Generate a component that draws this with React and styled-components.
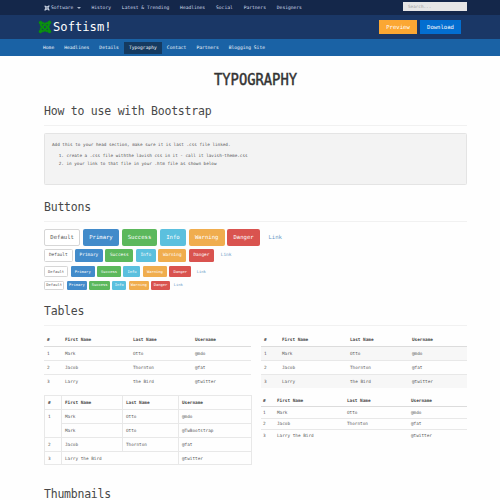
import React from "react";
import styled, { createGlobalStyle, css } from "styled-components";
import { FaJoomla } from "react-icons/fa";

const mono = `"DejaVu Sans Mono", monospace`;

const Global = createGlobalStyle`
  * { box-sizing: border-box; }
  html, body { margin: 0; background: #fefefe; overflow: hidden; }
  body { font: 4.36px/1.4 ${mono}; color: #444; }
`;

const Page = styled.div`width: 500px; height: 500px; overflow: hidden;`;

const TopBar = styled.header`
  height: 15px;
  padding: 1px 33px 0 43.5px;
  display: flex;
  align-items: center;
  background: #14274a;
  color: #d3dcea;
  font-size: 4.64px;
`;
const TopLink = styled.a`
  display: flex;
  align-items: center;
  margin-right: 10.9px;
  white-space: pre;
`;
const BrandMark = styled(FaJoomla)`
  width: 6px; height: 6px; margin-right: 1.5px;
`;
const Caret = styled.i`
  margin-left: 3.3px;
  border: 1.5px solid transparent;
  border-width: 2px 2px 0;
  border-top-color: #aab6c8;
`;
const Search = styled.div`
  width: 64px; height: 9px;
  margin: -3px 0 0 auto;
  padding: 0 5px;
  background: #e6e6e6;
  color: #a0a0a0;
  font-size: 4.3px;
  line-height: 9px;
`;

const Masthead = styled.div`
  height: 24px;
  padding: 0 39px 0 38px;
  display: flex;
  align-items: center;
  background: #1a3766;
  color: #fff;
`;
const Logo = styled.div`
  display: flex;
  align-items: center;
  height: 24px;
  font-size: 13px;
  line-height: 24px;
`;
const LogoText = styled.span`
  transform: scaleX(0.935);
  transform-origin: left center;
`;
const LogoMark = styled(FaJoomla)`
  width: 14px; height: 14px; margin: -1px 1px 0 0; color: #0a920e;
  stroke: #0a920e; stroke-width: 14px;
`;
const Actions = styled.div`
  margin-left: auto;
  display: flex;
  gap: 3px;
`;
const Action = styled.button`
  width: ${(p) => p.$w}px; height: 14px;
  padding: 0; border: 0;
  background: ${(p) => p.$bg};
  color: #fff;
  font: 5.6px/14px ${mono};
`;

const NavBar = styled.nav`
  height: 17px;
  padding: 1px 0 0 38px;
  display: flex;
  align-items: center;
  background: #1a62a5;
`;
const NavLink = styled.a`
  height: 12px;
  padding: 0 5.04px;
  color: #f4f8fc;
  font-size: 4.64px;
  line-height: 12.5px;
  white-space: nowrap;
  background: ${(p) => (p.$active ? "#153a60" : "transparent")};
`;

const Main = styled.main`width: 423px; margin-left: 44px;`;
const Title = styled.h1`
  height: 47px;
  margin: 0;
  text-align: center;
  color: #333;
  font-size: 15px;
  font-weight: 400;
  line-height: 48px;
  transform: scaleX(0.92);
  -webkit-text-stroke: 0.45px #333;
`;
const Heading = styled.h2`
  height: ${(p) => p.$h || 23}px;
  margin: ${(p) => p.$top || 0}px 0 0;
  border-bottom: ${(p) => (p.$plain ? 0 : "1px solid #f1f1f1")};
  color: #484848;
  font-size: 11.5px;
  font-weight: 400;
  letter-spacing: -0.23px;
  line-height: 16px;
`;
const Well = styled.section`
  height: 52px;
  margin-top: 7px;
  padding: 7px 7px;
  background: #f3f3f3;
  border: 1px solid #e4e4e4;
  border-radius: 1.5px;
  color: #555;
  font-size: 4.3px;
  line-height: 7.5px;
`;
const Steps = styled.ol`
  margin: 3.5px 0 0;
  padding-left: 14.5px;
`;

const ButtonStack = styled.div`
  height: 71px;
  padding-top: 7px;
  display: flex;
  flex-direction: column;
`;
const ButtonRow = styled.div`
  display: flex;
  gap: 2.5px;
  height: ${(p) => p.$h}px;
  margin-bottom: ${(p) => p.$gap}px;
  font-size: ${(p) => p.$font}px;
`;
const Button = styled.button`
  width: ${(p) => p.$w}px;
  height: 100%;
  padding: 0;
  font: inherit;
  line-height: 1;
  color: ${(p) => p.$fg};
  background: ${(p) => p.$bg};
  border: ${(p) => (p.$edge ? `1px solid ${p.$edge}` : 0)};
  border-radius: ${(p) => p.$r}px;
`;

const Tables = styled.div`
  display: grid;
  grid-template-columns: 207px 206px;
  column-gap: 10px;
  align-items: start;
`;
const Column = styled.div`padding-top: 7px;`;
const Table = styled.table`
  width: 100%;
  table-layout: fixed;
  border-collapse: collapse;
  margin-bottom: ${(p) => p.$after || 0}px;
  font-size: 4.36px;
  line-height: 5px;
  ${(p) => p.$bordered && css`td, th { border: 1px solid #e8e8e8; }`}
`;
const Row = styled.tr`
  height: ${(p) => p.$h}px;
  background: ${(p) => (p.$striped ? "#f7f7f7" : "transparent")};
`;
const Th = styled.th`
  padding: 0 0 0 ${(p) => p.$pad}px;
  text-align: left;
  font-weight: 700;
  color: #444;
`;
const Td = styled.td`
  padding: ${(p) => (p.$tall ? 4 : 0)}px 0 0 ${(p) => p.$pad}px;
  vertical-align: ${(p) => (p.$tall ? "top" : "middle")};
  border-top: 1px solid ${(p) => (p.$first ? "#dcdcdc" : "#e8e8e8")};
  color: #5c5c5c;
`;

const headers = ["#", "First Name", "Last Name", "Username"];
const people = [
  ["1", "Mark", "Otto", "@mdo"],
  ["2", "Jacob", "Thornton", "@fat"],
  ["3", "Larry", "the Bird", "@twitter"],
];
const compactPeople = [
  people[0],
  people[1],
  ["3", { text: "Larry the Bird", span: 2 }, "@twitter"],
];
const borderedPeople = [
  [{ text: "1", rows: 2 }, "Mark", "Otto", "@mdo"],
  ["Mark", "Otto", "@TwBootstrap"],
  people[1],
  compactPeople[2],
];

function DataTable({ cols, rows, heights, pad = 3, striped, bordered, after }) {
  return (
    <Table $bordered={bordered} $after={after}>
      <colgroup>{cols.map((w, i) => <col key={i} width={w} />)}</colgroup>
      <thead>
        <Row $h={heights[0]}>{headers.map((h) => <Th key={h} $pad={pad}>{h}</Th>)}</Row>
      </thead>
      <tbody>
        {rows.map((cells, r) => (
          <Row key={r} $h={heights[r + 1]} $striped={striped && r % 2 === 0}>
            {cells.map((c, i) => (
              <Td key={i} $pad={pad} $first={r === 0} $tall={!!c.rows} colSpan={c.span} rowSpan={c.rows}>
                {c.text || c}
              </Td>
            ))}
          </Row>
        ))}
      </tbody>
    </Table>
  );
}

const kinds = [
  ["Default", "#fff", "#555", "#d6d6d6"],
  ["Primary", "#428bca", "#fff"],
  ["Success", "#5cb85c", "#fff"],
  ["Info", "#5bc0de", "#fff"],
  ["Warning", "#f0ad4e", "#fff"],
  ["Danger", "#d9534f", "#fff"],
  ["Link", "transparent", "#6a9ac6"],
];
const sizes = [
  { h: 17, gap: 3, font: 5.6, r: 2, w: [36.3, 36.3, 35.8, 26.2, 36.2, 32.7, 25.6] },
  { h: 13, gap: 4, font: 4.45, r: 1.5, w: [28.5, 27.8, 28, 20, 28, 25.3, 19] },
  { h: 11, gap: 4, font: 3.8, r: 1.3, w: [24.2, 24, 23.8, 17, 23.8, 22, 15] },
  { h: 9, gap: 0, font: 3.75, r: 1.2, w: [20.3, 20.2, 20.2, 14, 20.2, 18.3, 12] },
];

export default function App() {
  return (
    <Page>
      <Global />
      <TopBar>
        <TopLink><BrandMark />Software<Caret /></TopLink>
        {["History", "Latest & Trending", "Headlines", "Social", "Partners", "Designers"].map((t) => (
          <TopLink key={t}>{t}</TopLink>
        ))}
        <Search>Search...</Search>
      </TopBar>
      <Masthead>
        <Logo><LogoMark /><LogoText>Softism!</LogoText></Logo>
        <Actions>
          <Action $w={38} $bg="#fba733">Preview</Action>
          <Action $w={41} $bg="#036ed0">Download</Action>
        </Actions>
      </Masthead>
      <NavBar>
        {["Home", "Headlines", "Details", "Typography", "Contact", "Partners", "Blogging Site"].map((t) => (
          <NavLink key={t} $active={t === "Typography"}>{t}</NavLink>
        ))}
      </NavBar>
      <Main>
        <Title>TYPOGRAPHY</Title>
        <Heading>How to use with Bootstrap</Heading>
        <Well>
          Add this to your head section, make sure it is last .css file linked.
          <Steps>
            <li>create a .css file withthe lavish css in it - call it lavish-theme.css</li>
            <li>in your link to that file in your .htm file as shown below</li>
          </Steps>
        </Well>
        <Heading $top={14}>Buttons</Heading>
        <ButtonStack>
          {sizes.map((s) => (
            <ButtonRow key={s.h} $h={s.h} $gap={s.gap} $font={s.font}>
              {kinds.map(([label, bg, fg, edge], i) => (
                <Button key={label} $w={s.w[i]} $r={s.r} $bg={bg} $fg={fg} $edge={edge}>{label}</Button>
              ))}
            </ButtonRow>
          ))}
        </ButtonStack>
        <Heading $top={10}>Tables</Heading>
        <Tables>
          <Column>
            <DataTable cols={[18, 68, 62, 59]} rows={people} heights={[13, 14, 14, 14]} after={7} />
            <DataTable bordered cols={[17, 61, 56, 73]} rows={borderedPeople} heights={[14, 14, 14, 14, 13]} />
          </Column>
          <Column>
            <DataTable striped cols={[18, 68, 62, 58]} rows={people} heights={[13, 14, 14, 14]} after={7} />
            <DataTable pad={2} cols={[14, 70, 64, 58]} rows={compactPeople} heights={[11, 12, 11, 12]} />
          </Column>
        </Tables>
        <Heading $plain $h={14} $top={21}>Thumbnails</Heading>
      </Main>
    </Page>
  );
}
